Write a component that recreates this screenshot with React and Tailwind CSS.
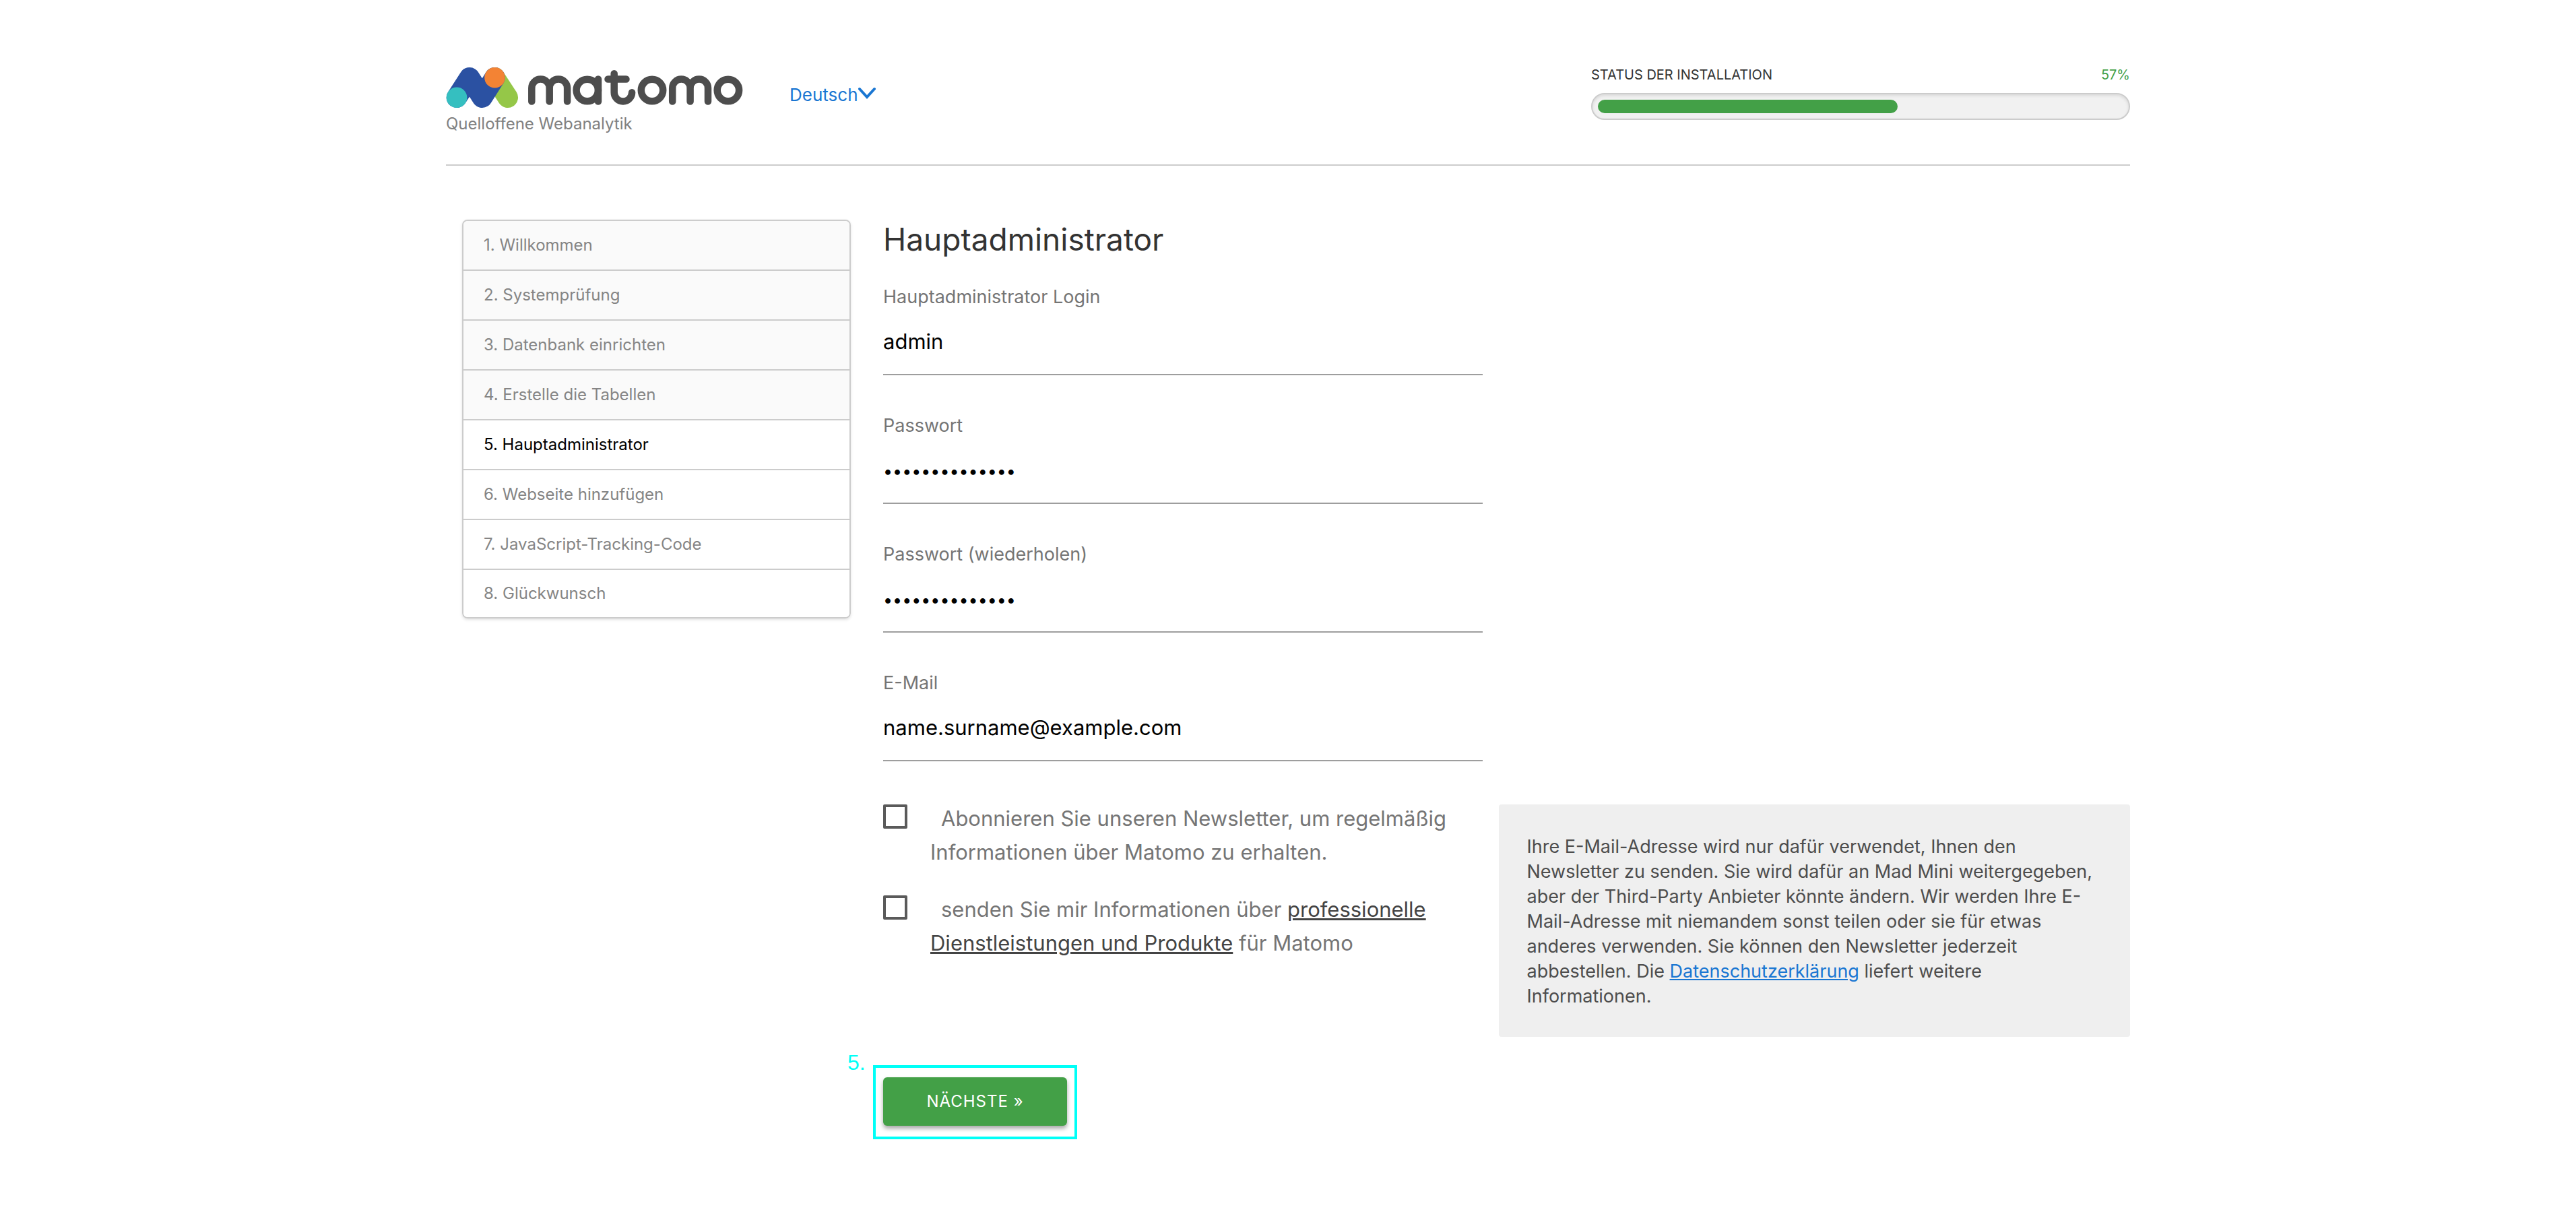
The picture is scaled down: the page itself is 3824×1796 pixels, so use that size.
const steps = [
  '1. Willkommen',
  '2. Systemprüfung',
  '3. Datenbank einrichten',
  '4. Erstelle die Tabellen',
  '5. Hauptadministrator',
  '6. Webseite hinzufügen',
  '7. JavaScript-Tracking-Code',
  '8. Glückwunsch',
];
const CURRENT = 4;
const PROGRESS = 57;

function Logo() {
  return (
    <svg viewBox="0 0 442 64" className="h-16 w-[442px]" role="img" aria-label="Matomo">
      <path d="M72.5 17.3L91.7 46.7" stroke="#95c748" strokeWidth="30.6" strokeLinecap="round" />
      <path d="M16 46.7L35 17.3L53.8 46.7L72.5 17.3" fill="none" stroke="#2b51a2" strokeWidth="30.6" strokeLinecap="round" strokeLinejoin="round" />
      <circle cx="16" cy="46.7" r="15.3" fill="#35bfc0" />
      <circle cx="72.5" cy="17.3" r="15.3" fill="#f38334" />
      <g fill="none" stroke="#4d4d4d" strokeWidth="10.5" strokeLinecap="round">
        <path d="M127.3 52.5V32.7a13.2 13.2 0 0 1 26.4 0V52.5M153.7 32.7a13.2 13.2 0 0 1 26.4 0V52.5" />
        <circle cx="209.8" cy="36" r="16.2" />
        <path d="M226 19.5V52.5" />
        <path d="M249.7 11.3V39.3a13.2 13.2 0 0 0 26.4 0M240.5 19.5h27" />
        <circle cx="306" cy="36" r="16.2" />
        <path d="M336.2 52.5V32.7a13.2 13.2 0 0 1 26.4 0V52.5M362.6 32.7a13.2 13.2 0 0 1 26.4 0V52.5" />
        <circle cx="418.9" cy="36" r="16.2" />
      </g>
    </svg>
  );
}

function Field({ id, label, type = 'text', value }) {
  return (
    <div className="mb-[55px]">
      <label htmlFor={id} className="block text-[27px] leading-[40px] text-[#757575]">{label}</label>
      <input
        id={id}
        type={type}
        defaultValue={value}
        className={`block h-24 w-full border-b-2 border-[#9e9e9e] bg-transparent text-black outline-none ${type === 'password' ? 'text-[25px]' : 'pb-1 text-[31px]'}`}
      />
    </div>
  );
}

function Check({ id, children }) {
  return (
    <div className="mb-[39px] flex">
      <input id={id} type="checkbox" className="mr-[34px] h-9 w-9 shrink-0 appearance-none rounded-[2px] border-4 border-[#5a5a5a]" />
      <label htmlFor={id} className="-mt-1 indent-4 text-[31px] leading-[50px] text-[#757575]">{children}</label>
    </div>
  );
}

export default function App() {
  return (
    <div className="min-h-screen bg-white pt-[98px] font-['Inter',sans-serif] text-[#333]">
      <div className="mx-auto w-[2500px] max-w-full">
        <header className="flex h-[148px] items-start justify-between border-b-2 border-[#ccc]">
          <div className="flex">
            <div className="w-[510px]">
              <Logo />
              <p className="mt-1 text-[24px] leading-[36px] text-[#808080]">Quelloffene Webanalytik</p>
            </div>
            <button type="button" className="mt-6 flex h-9 items-center text-[26px] text-[#1976d2]">
              Deutsch
              <svg viewBox="0 0 28 18" className="mb-1 h-[18px] w-7" fill="none" stroke="currentColor" strokeWidth="4" strokeLinecap="round"><path d="M2 3l11 12L24 3" /></svg>
            </button>
          </div>
          <div className="w-[800px]">
            <div className="flex justify-between text-[20px] leading-[26px]">
              <span id="status">STATUS DER INSTALLATION</span>
              <span className="text-[#43a047]">{PROGRESS}%</span>
            </div>
            <div role="progressbar" aria-labelledby="status" aria-valuenow={PROGRESS} className="mt-[14px] h-10 rounded-[20px] border-2 border-[#ccc] bg-[#f1f1f1] p-2 shadow-[inset_0_2px_4px_rgba(0,0,0,0.1)]">
              <div className="h-5 rounded-[10px] bg-[#43a047]" style={{ width: `${PROGRESS}%` }} />
            </div>
          </div>
        </header>

        <div className="mt-20 flex">
          <nav className="w-1/4 shrink-0 px-6">
            <ol className="overflow-hidden rounded-lg border-2 border-[#ccc] shadow-[0_2px_4px_rgba(0,0,0,0.12)]">
              {steps.map((s, i) => (
                <li
                  key={s}
                  className={`h-[74px] border-b-2 border-[#ccc] px-[30px] text-[24px] leading-[72px] last:h-[70px] last:border-b-0 last:leading-[70px] ${i === CURRENT ? 'text-black' : 'text-[#858585]'} ${i < CURRENT ? 'bg-[#fafafa]' : 'bg-white'}`}
                >
                  {s}
                </li>
              ))}
            </ol>
          </nav>

          <main className="min-w-0 flex-1">
            <h1 className="px-6 text-[46px] leading-[58px]">Hauptadministrator</h1>
            <form className="mt-[37px]">
              <div className="mb-16 w-1/2 px-6">
                <Field id="login" label="Hauptadministrator Login" value="admin" />
                <Field id="password" label="Passwort" type="password" value="abcdefghijklmn" />
                <Field id="password-repeat" label="Passwort (wiederholen)" type="password" value="abcdefghijklmn" />
                <Field id="email" label="E-Mail" type="email" value="name.surname@example.com" />
              </div>
              <div className="flex">
                <div className="w-1/2 shrink-0 px-6">
                  <Check id="newsletter">Abonnieren Sie unseren Newsletter, um regelmäßig Informationen über Matomo zu erhalten.</Check>
                  <Check id="offers">
                    senden Sie mir Informationen über{' '}
                    <a href="#services" className="text-[#444] underline">professionelle Dienstleistungen und Produkte</a> für Matomo
                  </Check>
                </div>
                <p className="flex-1 rounded bg-[#efefef] px-[42px] pt-11 pb-[42px] text-[27px] leading-[37px] text-[#4d4d4d]">
                  Ihre E-Mail-Adresse wird nur dafür verwendet, Ihnen den Newsletter zu senden. Sie wird dafür an Mad Mini weitergegeben, aber der Third-Party Anbieter könnte ändern. Wir werden Ihre E-Mail-Adresse mit niemandem sonst teilen oder sie für etwas anderes verwenden. Sie können den Newsletter jederzeit abbestellen. Die{' '}
                  <a href="#privacy" className="text-[#1976d2] underline">Datenschutzerklärung</a> liefert weitere Informationen.
                </p>
              </div>
              <div className="relative mt-[42px] ml-[9px] w-fit border-4 border-[#00fff7] px-[11px] pt-[14px] pb-4">
                <span className="absolute top-[-24px] left-[-42px] font-['Liberation_Sans',sans-serif] text-[32px] leading-[32px] text-[#00fff7]">5.</span>
                <button type="submit" className="block h-[72px] w-[273px] rounded-md bg-[#43a047] text-[24px] tracking-[1px] text-white shadow-[0_4px_6px_rgba(0,0,0,0.35)]">NÄCHSTE »</button>
              </div>
            </form>
          </main>
        </div>
      </div>
    </div>
  );
}
